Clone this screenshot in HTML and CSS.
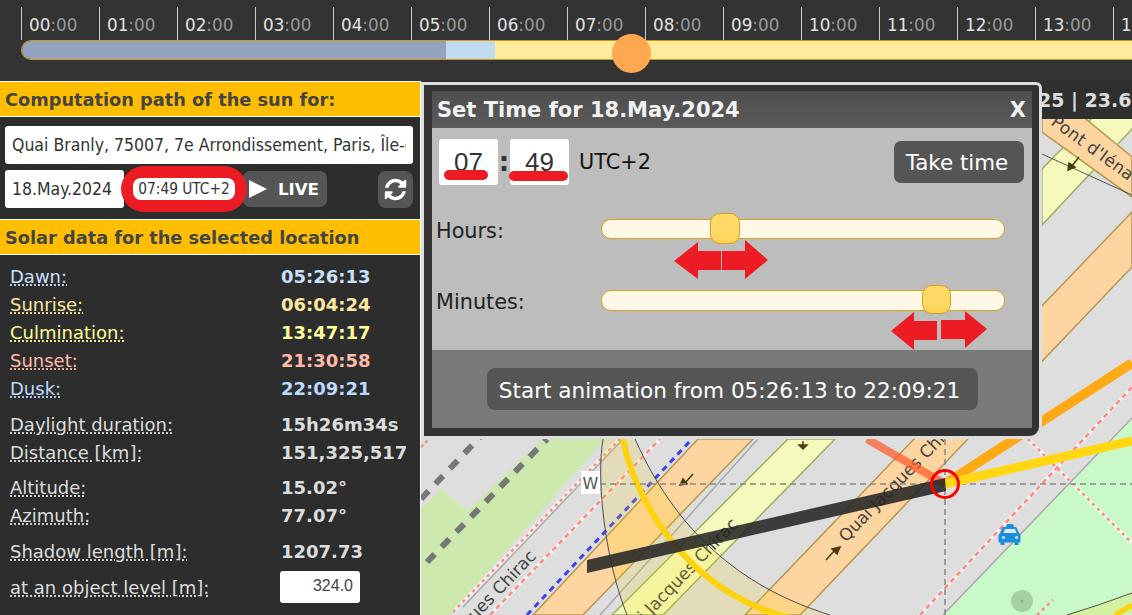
FILE: index.html
```html
<!DOCTYPE html>
<html lang="en">
<head>
<meta charset="utf-8">
<title>Sun path</title>
<link rel="stylesheet" href="styles.css">
</head>
<body>
<header class="timeline">
  <div class="ticks">
    <span class="tick">00<i>:00</i></span><span class="tick">01<i>:00</i></span><span class="tick">02<i>:00</i></span><span class="tick">03<i>:00</i></span><span class="tick">04<i>:00</i></span><span class="tick">05<i>:00</i></span><span class="tick">06<i>:00</i></span><span class="tick">07<i>:00</i></span><span class="tick">08<i>:00</i></span><span class="tick">09<i>:00</i></span><span class="tick">10<i>:00</i></span><span class="tick">11<i>:00</i></span><span class="tick">12<i>:00</i></span><span class="tick">13<i>:00</i></span><span class="tick">14<i>:00</i></span>
  </div>
  <div class="bar">
    <span class="seg seg-night"></span><span class="seg seg-dawn"></span><span class="seg seg-day"></span>
    <span class="sun"></span>
  </div>
</header>
<main class="main">
  <aside class="side">
    <h2 class="head">Computation path of the sun for:</h2>
    <section class="form">
      <div class="field field-address"><span>Quai Branly, 75007, 7e Arrondissement, Paris, Île-de-France, France</span></div>
      <div class="form-row">
        <div class="field field-date">18.May.2024</div>
        <div class="time-pill"><span>07:49 UTC+2</span></div>
        <button class="live"><svg class="play" viewBox="0 0 18 18"><path d="M0 0L18 9L0 18Z"/></svg>LIVE</button>
        <button class="refresh"><svg viewBox="0 0 1792 1792"><path d="M1639 1056q0 5-1 7-64 268-268 434.500t-478 166.500q-146 0-282.500-55t-243.500-157l-129 129q-19 19-45 19t-45-19-19-45v-448q0-26 19-45t45-19h448q26 0 45 19t19 45-19 45l-137 137q71 66 161 102t187 36q134 0 250-65t186-179q11-17 53-117 8-23 30-23h192q13 0 22.500 9.500t9.500 22.500zm25-800v448q0 26-19 45t-45 19h-448q-26 0-45-19t-19-45 19-45l138-138q-148-137-349-137-134 0-250 65t-186 179q-11 17-53 117-8 23-30 23h-199q-13 0-22.500-9.500t-9.500-22.500v-7q65-268 270-434.500t480-166.500q146 0 284 55.500t245 156.500l130-129q19-19 45-19t45 19 19 45z"/></svg></button>
      </div>
    </section>
    <h2 class="head">Solar data for the selected location</h2>
    <section class="stats">
      <div class="group">
        <div class="row c-dawn"><span class="lbl">Dawn:</span><b>05:26:13</b></div>
        <div class="row c-rise"><span class="lbl">Sunrise:</span><b>06:04:24</b></div>
        <div class="row c-culm"><span class="lbl">Culmination:</span><b>13:47:17</b></div>
        <div class="row c-set"><span class="lbl">Sunset:</span><b>21:30:58</b></div>
        <div class="row c-dusk"><span class="lbl">Dusk:</span><b>22:09:21</b></div>
      </div>
      <div class="group group-tight">
        <div class="row"><span class="lbl">Daylight duration:</span><b>15h26m34s</b></div>
        <div class="row"><span class="lbl">Distance [km]:</span><b>151,325,517</b></div>
      </div>
      <div class="group">
        <div class="row"><span class="lbl">Altitude:</span><b>15.02°</b></div>
        <div class="row"><span class="lbl">Azimuth:</span><b>77.07°</b></div>
      </div>
      <div class="group">
        <div class="row"><span class="lbl">Shadow length [m]:</span><b>1207.73</b></div>
      </div>
      <div class="group">
        <div class="row"><span class="lbl">at an object level [m]:</span><div class="level">324.0</div></div>
      </div>
    </section>
  </aside>
  <section class="map">
    <div class="strip">25 | 23.69</div>
    <svg class="canvas" viewBox="421 119 711 496" width="711" height="496">
      <rect x="421" y="80" width="711" height="540" fill="#dedede"/>
      <polygon points="543,439 605,439 450,615 421,615 421,508 442,489 467,511" fill="#cde9ae"/>
      <polygon points="943,615 1132,418 1132,615" fill="#c9f9c9"/>
      <g fill="none" stroke="#777" stroke-width="6" stroke-dasharray="11 10">
        <line x1="421" y1="499" x2="480" y2="437"/>
        <line x1="427" y1="562" x2="547" y2="439"/>
      </g>
      <g fill="none" stroke="#fff" stroke-opacity=".5" stroke-width="4">
        <line x1="453" y1="612" x2="620" y2="439"/>
        <line x1="490" y1="615" x2="660" y2="439"/>
        <line x1="920" y1="615" x2="1132" y2="387"/>
        <line x1="1028" y1="439" x2="1132" y2="543"/>
      </g>
      <g fill="none" stroke="#f98d86" stroke-width="2.500">
        <line x1="421" y1="447" x2="429" y2="439" stroke-dasharray="3 3"/>
        <line x1="453" y1="612" x2="620" y2="439" stroke-dasharray="3 4"/>
        <line x1="490" y1="615" x2="660" y2="439" stroke-dasharray="5 4"/>
        <line x1="920" y1="615" x2="1132" y2="387" stroke-dasharray="5 4"/>
        <line x1="1028" y1="439" x2="1132" y2="543" stroke-dasharray="3 4"/>
        <line x1="1037" y1="615" x2="1053" y2="600" stroke-dasharray="3 4"/>
      </g>
      <g fill="none" stroke="#aaa" stroke-width="1.500">
        <line x1="463" y1="607" x2="623" y2="439"/>
        <line x1="600" y1="615" x2="758" y2="439"/>
        <line x1="943" y1="615" x2="1132" y2="418"/>
      </g>
      <line x1="527" y1="615" x2="692" y2="439" stroke="#3f3ff0" stroke-width="3" stroke-dasharray="6 5"/>
      <polygon class="road" points="533,615 698,439 753,439 583,615"/>
      <polygon class="road" points="745,615 1132,212 1132,267 800,615"/>
      <polygon class="lane" points="612,615 788,439 835,439 663,615"/>
      <polygon class="lane" points="1042,169 1095,115 1140,115 1132,129 1042,225"/>
      <polygon class="road" points="1042,83 1132,157 1132,197 1042,132"/>
      <line x1="1042" y1="154" x2="1132" y2="195" stroke="#555" stroke-width="1"/>
      <g fill="#4a3c10" stroke="#4a3c10" stroke-width="1.500">
        <line x1="693" y1="474" x2="685" y2="483"/><polygon points="680,485 683,479 687,484"/>
        <line x1="826" y1="560" x2="835" y2="550"/><polygon points="840,547 832,549 837,554"/>
        <line x1="803" y1="441" x2="803" y2="447"/><polygon points="799,445 807,445 803,449"/>
        <line x1="1079" y1="157" x2="1072" y2="166"/><polygon points="1068,170 1069,163 1075,167"/>
      </g>
      <text class="maptext" text-anchor="end" transform="translate(537 557) rotate(-46)">ques Chirac</text>
      <text class="maptext" text-anchor="end" transform="translate(739 525) rotate(-46)">i Jacques Chirac</text>
      <text class="maptext" transform="translate(846 543) rotate(-46)">Quai Jacques Chirac</text>
      <text class="maptext" transform="translate(1050 124) rotate(36)" textLength="97">Pont d'Iéna</text>
      <circle cx="1022" cy="601" r="11" fill="#a5d1a0"/>
      <circle cx="1022" cy="601" r="1.500" fill="#7fae7a"/>
      <path d="M603 439C596 480 605 560 627 615L830 615C750 590 680 540 635 439Z" fill="#ffd400" fill-opacity=".16"/>
      <path d="M1067 615Q1100 605 1132 593V615Z" fill="#ffd400" fill-opacity=".2"/>
      <g fill="none" stroke="#4d4d4d" stroke-width="1">
        <path d="M603 439C596 480 605 560 627 615"/>
        <path d="M635 439C680 540 750 590 830 615"/>
        <path d="M1067 615Q1100 605 1132 593"/>
      </g>
      <path d="M623 439C632 490 680 590 790 618" fill="none" stroke="#fdd20e" stroke-width="6"/>
      <path d="M1115 615L1132 605" fill="none" stroke="#fdd20e" stroke-width="5"/>
      <g fill="none" stroke="#888" stroke-width="1.500" stroke-dasharray="6 4">
        <line x1="600" y1="484" x2="1132" y2="484"/>
        <line x1="945" y1="439" x2="945" y2="615"/>
      </g>
      <rect x="581" y="471" width="19" height="23" fill="#fff"/>
      <text class="compass" x="590.500" y="489" text-anchor="middle">W</text>
      <line x1="867" y1="439" x2="945" y2="484" stroke="#ff5a28" stroke-opacity=".72" stroke-width="8"/>
      <line x1="945" y1="484" x2="1132" y2="363" stroke="#ffa915" stroke-width="9.500"/>
      <line x1="945" y1="484" x2="1132" y2="441" stroke="#ffd713" stroke-width="9"/>
      <polygon points="587,560 945,478 946,491 587,573" fill="#262626" fill-opacity=".88"/>
      <circle cx="945" cy="484" r="13.500" fill="none" stroke="#f00" stroke-width="3"/>
      <path d="M1007 524h6l1 3h1.500q1 0 1.500 1.500l2 4.500q1.500 1 1.500 2.500v6q0 1-1 1h-1v2.500h-4v-2.500h-10v2.500h-4v-2.500h-1q-1 0-1-1v-6q0-1.500 1.500-2.500l2-4.500q.5-1.500 1.500-1.500h2.500z" fill="#1a8fdb"/>
      <path d="M1005 529h10l1.500 4h-13z" fill="#dde8ee"/>
      <circle cx="1003.500" cy="537.500" r="1.500" fill="#dde8ee"/><circle cx="1016.500" cy="537.500" r="1.500" fill="#dde8ee"/>
    </svg>
    <div class="modal">
      <div class="modal-head"><span>Set Time for 18.May.2024</span><span>X</span></div>
      <div class="modal-body">
        <div class="time-row">
          <div class="num">07<span class="mark mark-h"></span></div>
          <span class="colon">:</span>
          <div class="num">49<span class="mark mark-m"></span></div>
          <span class="utc">UTC+2</span>
          <button class="take">Take time</button>
        </div>
        <div class="slider slider-h">
          <span class="slider-label">Hours:</span>
          <div class="track">
            <span class="handle handle-h"></span>
            <svg class="arrows arrows-h" width="96" height="42" viewBox="0 0 96 42"><polygon points="1,22 25,3 25,12 48,12 48,31 25,31 25,40"/><polygon points="49,12 72,12 72,1 95,21 72,40 72,31 49,31"/></svg>
          </div>
        </div>
        <div class="slider slider-m">
          <span class="slider-label">Minutes:</span>
          <div class="track">
            <span class="handle handle-m"></span>
            <svg class="arrows arrows-m" width="98" height="42" viewBox="0 0 98 42"><polygon points="1,21 24,2 24,11 47,11 47,30 24,30 24,40"/><polygon points="51,10 75,10 75,1 97,19 75,38 75,29 51,29"/></svg>
          </div>
        </div>
      </div>
      <div class="modal-foot"><button class="start">Start animation from 05:26:13 to 22:09:21</button></div>
    </div>
  </section>
</main>
</body>
</html>
```
FILE: styles.css
```css
* { box-sizing: border-box; }
html, body { margin: 0; height: 100%; }
body {
  width: 1132px;
  height: 615px;
  overflow: hidden;
  background: #333;
  font-family: "DejaVu Sans", sans-serif;
  color: #ddd;
}
button { font-family: inherit; border: 0; color: #fff; background: #555; padding: 0; }

.timeline { height: 81px; padding-top: 7px; overflow: hidden; }
.ticks { display: flex; height: 33px; padding-left: 21px; }
.tick {
  flex: 0 0 78px;
  border-left: 1px solid #ccc;
  padding: 9px 0 0 7px;
  font-size: 16.800px;
  line-height: 18px;
  color: #e4e4e4;
  white-space: nowrap;
}
.tick i { font-style: normal; color: #999; }
.bar {
  position: relative;
  display: flex;
  width: 1200px;
  height: 20px;
  margin-left: 21px;
  border: solid #cf9a1c;
  border-width: 1px 0 1px 1px;
  border-radius: 10px 0 0 10px;
  overflow: visible;
}
.seg { display: block; height: 100%; }
.seg-night { width: 424px; background: #94a3bf; border-radius: 9px 0 0 9px; }
.seg-dawn { width: 49px; background: #c0dbef; }
.seg-day { flex: 1; background: #ffeb9c; }
.sun {
  position: absolute;
  left: 590px;
  top: -7px;
  width: 39px;
  height: 39px;
  border-radius: 50%;
  background: #ffa851;
}

.main { display: flex; height: 534px; }
.side {
  flex: 0 0 421px;
  width: 421px;
  min-width: 0;
  background: #2d2d2d;
  border-right: 1px solid #fff;
}
.head {
  margin: 0;
  height: 36px;
  padding-left: 5px;
  background: #ffbf00;
  border: solid #fff;
  border-width: 1px 0;
  color: #444;
  font-size: 17.750px;
  line-height: 36px;
  font-weight: bold;
  white-space: nowrap;
}
.form { height: 102px; padding: 9px 7px 0 5px; }
.field {
  background: #fff;
  height: 38px;
  border-radius: 3px;
  color: #333;
  font-family: "DejaVu Sans Condensed", "DejaVu Sans", sans-serif;
  font-stretch: condensed;
  font-size: 17.500px;
  line-height: 38px;
}
.field-address { padding: 0 7px; }
.field-address span { display: block; overflow: hidden; white-space: nowrap; }
.form-row { display: flex; align-items: center; margin-top: 6px; height: 38px; }
.field-date { flex: 0 0 119px; padding-left: 7px; white-space: nowrap; }
.time-pill {
  position: relative;
  flex: 0 0 126px;
  height: 46px;
  margin-left: -3px;
  background: #ed1c24;
  border-radius: 23px;
  display: flex;
  align-items: center;
  justify-content: center;
  z-index: 1;
}
.time-pill span {
  width: 102px;
  height: 22px;
  background: #fff;
  border-radius: 8px;
  color: #333;
  font-family: "DejaVu Sans Condensed", "DejaVu Sans", sans-serif;
  font-stretch: condensed;
  font-size: 15.300px;
  line-height: 22px;
  text-align: center;
  white-space: nowrap;
}
.live {
  display: flex;
  align-items: center;
  flex: 0 0 84px;
  height: 36px;
  margin-left: -4px;
  padding-left: 6px;
  border-radius: 7px;
  font-size: 16.600px;
  font-weight: bold;
}
.play { width: 18px; height: 18px; fill: #fff; margin-right: 11px; }
.refresh {
  display: flex;
  align-items: center;
  justify-content: center;
  width: 35px;
  height: 37px;
  margin-left: 51px;
  border-radius: 8px;
}
.refresh svg { width: 25px; height: 25px; fill: #fff; }

.stats { padding: 7px 0 0 10px; }
.group { margin-bottom: 8px; }
.group-tight { margin-bottom: 7px; }
.row {
  display: flex;
  align-items: center;
  height: 28px;
  font-size: 18px;
  white-space: nowrap;
}
.lbl {
  flex: 0 0 271px;
  text-decoration: underline dotted;
  text-underline-offset: 2px;
}
.row b { font-size: 18px; font-weight: bold; }
.c-dawn { color: #c8e0fa; }
.c-rise { color: #ffe9a0; }
.c-culm { color: #ffff99; }
.c-set { color: #ffbba8; }
.c-dusk { color: #bcd9ff; }
.level {
  width: 80px;
  height: 32px;
  margin-left: -1px;
  padding: 0 7px;
  background: #fff;
  border-radius: 3px;
  color: #444;
  font-family: "Liberation Sans", sans-serif;
  font-size: 16px;
  line-height: 30px;
  text-align: right;
}

.map { position: relative; flex: 1; min-width: 0; overflow: hidden; background: #dedede; }
.strip {
  height: 38px;
  padding-left: 617px;
  background: #2f2f2f;
  color: #ddd;
  font-size: 19px;
  font-weight: bold;
  line-height: 39px;
  white-space: nowrap;
  overflow: hidden;
}
.canvas { display: block; }
.road { fill: #fdd5a0; stroke: #b8964c; stroke-width: 1.500; }
.lane { fill: #f5f9bc; stroke: #9cb060; stroke-width: 1.500; }
.maptext { font-size: 17px; fill: #444; }
.compass { font-size: 16px; fill: #555; }

.modal {
  position: absolute;
  left: 0;
  top: 1px;
  width: 621px;
  height: 357px;
  border: 3px solid #ddd;
  border-radius: 0 6px 12px 0;
  background: #333;
  padding: 6px 7px 8px 8px;
}
.modal-head {
  display: flex;
  justify-content: space-between;
  height: 37px;
  padding: 0 6px 0 5px;
  background: linear-gradient(#4e4e4e, #5a5a5a);
  color: #f2f2f2;
  font-size: 21px;
  font-weight: bold;
  line-height: 38px;
}
.modal-body { height: 222px; background: #bdbdbd; padding: 11px 8px 0 7px; color: #111; }
.time-row { display: flex; align-items: center; height: 46px; }
.num {
  position: relative;
  width: 59px;
  height: 46px;
  background: #fff;
  border-radius: 3px;
  color: #333;
  font-family: "Liberation Sans", sans-serif;
  font-size: 26px;
  line-height: 46px;
  text-align: center;
}
.mark {
  position: absolute;
  height: 10px;
  background: #ed1c24;
  border-radius: 5px;
}
.mark-h { left: 5px; top: 31px; width: 44px; }
.mark-m { left: -1px; top: 32px; width: 59px; }
.colon { width: 12px; text-align: center; font-size: 26px; font-weight: bold; color: #333; }
.utc { margin-left: 10px; font-size: 20.800px; }
.take {
  width: 130px;
  height: 42px;
  margin-left: auto;
  padding-right: 4px;
  border-radius: 7px;
  font-size: 21.400px;
}
.slider { display: flex; align-items: center; margin-left: -3px; }
.slider-h { margin-top: 34px; height: 20px; }
.slider-m { margin-top: 51px; height: 21px; }
.slider-label { flex: 0 0 165px; padding-top: 3px; font-size: 20.800px; color: #222; }
.track {
  position: relative;
  width: 404px;
  height: 100%;
  background: #fff8e7;
  border: 1px solid #daa020;
  border-radius: 10px;
}
.handle {
  position: absolute;
  display: block;
  background: linear-gradient(#ffd966 60%, #ffd254);
  border: 1px solid #d9a020;
  border-radius: 10px;
}
.handle-h { left: 108px; top: -7px; width: 30px; height: 31px; }
.handle-m { left: 320px; top: -6px; width: 29px; height: 29px; }
.arrows { position: absolute; fill: #ed1c24; }
.arrows-h { left: 71px; top: 19px; }
.arrows-m { left: 288px; top: 19px; }
.modal-foot {
  display: flex;
  align-items: center;
  justify-content: center;
  height: 78px;
  background: #7a7a7a;
}
.start {
  width: 491px;
  height: 42px;
  padding: 2px 5px 0 0;
  border-radius: 8px;
  font-size: 21.600px;
}
```
